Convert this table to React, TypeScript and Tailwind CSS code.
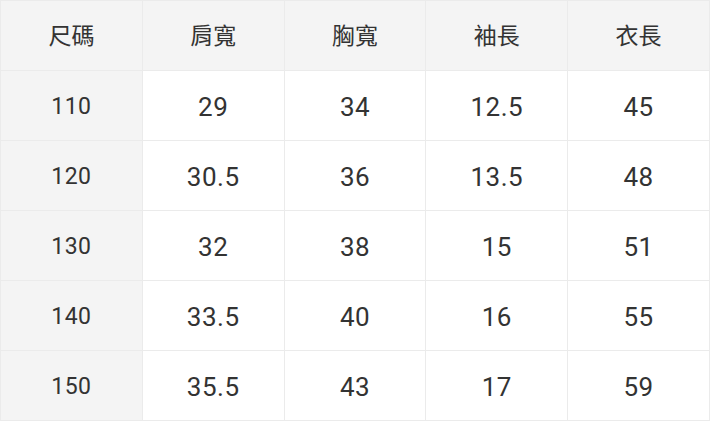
const HEADERS = ['尺碼', '肩寬', '胸寬', '袖長', '衣長'];

const ROWS: string[][] = [
  ['110', '29', '34', '12.5', '45'],
  ['120', '30.5', '36', '13.5', '48'],
  ['130', '32', '38', '15', '51'],
  ['140', '33.5', '40', '16', '55'],
  ['150', '35.5', '43', '17', '59'],
];

export default function App() {
  return (
    <div
      className="w-[710px] bg-white text-[#333]"
      style={{ fontFamily: 'Roboto, "Noto Sans CJK TC", sans-serif' }}
    >
      <div className="grid grid-cols-5 border-l border-t border-[#ebebeb]">
        {HEADERS.map((h) => (
          <div
            key={h}
            className="h-[70px] pt-1 flex items-center justify-center bg-[#f4f4f4] border-r border-b border-[#ebebeb] text-[23px]"
          >
            {h}
          </div>
        ))}
        {ROWS.map((row) =>
          row.map((cell, i) => (
            <div
              key={row[0] + '-' + i}
              className={
                i === 0
                  ? 'h-[70px] pt-1 flex items-center justify-center bg-[#f4f4f4] border-r border-b border-[#ebebeb] text-[23px] tracking-[0.5px]'
                  : 'h-[70px] pt-1 flex items-center justify-center bg-white border-r border-b border-[#ebebeb] text-[26px] tracking-[0.5px]'
              }
            >
              {cell}
            </div>
          ))
        )}
      </div>
    </div>
  );
}
